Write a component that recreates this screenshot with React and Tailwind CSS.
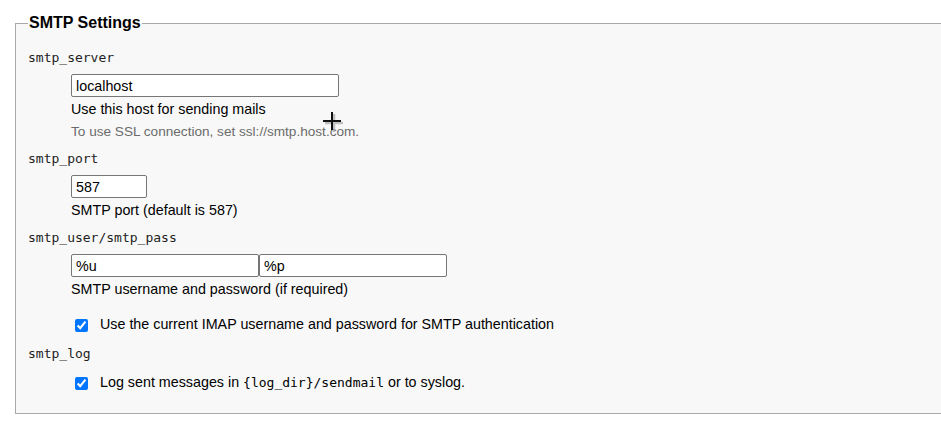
export default function App() {
  const mono = "font-['DejaVu_Sans_Mono',monospace] text-[13px] leading-5 text-[#222]";
  const input =
    'h-[23px] border border-[#767676] rounded-[2px] bg-white px-[4px] text-[14.3px] text-black outline-none';

  return (
    <div className="relative min-h-[431px] bg-white pt-[11px] font-['Liberation_Sans',Arial,sans-serif] text-[14.3px] text-black">
      <fieldset className="ml-[15px] mr-[-20px] border border-[#a9a9a9] bg-[#f8f8f8] pl-3 pr-3 pb-[18px]">
        <legend className="px-[1px] text-[16px] font-bold leading-6">SMTP Settings</legend>

        <div className="pt-[13px]">
          <div className={mono}>smtp_server</div>
          <div className="ml-[43px] mt-[6px]">
            <input className={`${input} w-[268px]`} defaultValue="localhost" />
            <div className="leading-6">Use this host for sending mails</div>
            <div className="text-[13.6px] leading-[21px] text-[#6b6b6b]">
              To use SSL connection, set ssl://smtp.host.com.
            </div>
          </div>

          <div className={`${mono} mt-[7px]`}>smtp_port</div>
          <div className="ml-[43px] mt-[6px]">
            <input className={`${input} w-[76px]`} defaultValue="587" />
            <div className="leading-6">SMTP port (default is 587)</div>
          </div>

          <div className={`${mono} mt-[6px]`}>smtp_user/smtp_pass</div>
          <div className="ml-[43px] mt-[6px]">
            <div className="flex">
              <input className={`${input} w-[188px]`} defaultValue="%u" />
              <input className={`${input} w-[188px]`} defaultValue="%p" />
            </div>
            <div className="leading-6">SMTP username and password (if required)</div>
            <label className="mt-[12px] flex h-6 items-center">
              <input type="checkbox" defaultChecked className="ml-[4px] mr-[12px] h-[13px] w-[13px]" />
              <span>Use the current IMAP username and password for SMTP authentication</span>
            </label>
          </div>

          <div className={`${mono} mt-[7px]`}>smtp_log</div>
          <div className="ml-[43px] mt-[7px]">
            <label className="flex h-6 items-center">
              <input type="checkbox" defaultChecked className="ml-[4px] mr-[12px] h-[13px] w-[13px]" />
              <span>
                Log sent messages in{' '}
                <span className="font-['DejaVu_Sans_Mono',monospace] text-[13px]">{'{log_dir}/sendmail'}</span> or to
                syslog.
              </span>
            </label>
          </div>
        </div>
      </fieldset>

      {/* mouse cursor caught in the screenshot */}
      <svg className="absolute left-[322px] top-[111px]" width="22" height="22" viewBox="0 0 22 22">
        <path d="M11 2v18M2 11h18" stroke="#9a9a9a" strokeWidth="2.5" transform="translate(1 1)" opacity="0.6" />
        <path d="M10 1v18M1 10h18" stroke="#111" strokeWidth="2" />
      </svg>
    </div>
  );
}
